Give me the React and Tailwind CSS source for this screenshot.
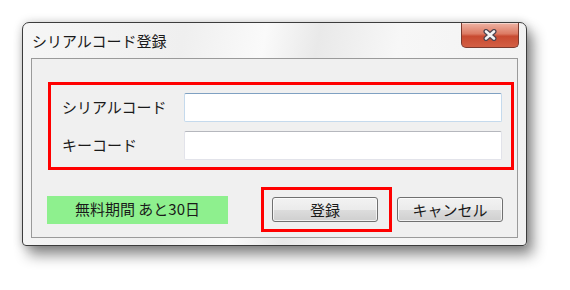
import React from 'react';

const jp = { fontFamily: '"Noto Sans CJK JP", "Noto Sans", sans-serif' };

const CloseButton = () => (
  <div className="absolute right-[7px] top-0 h-[25px] w-[58px] rounded-b-[5px] border border-t-0 border-[#7b3a2e] bg-[linear-gradient(#eeb3a4,#dc7a63_45%,#c84a31_55%,#d35f44)] shadow-[inset_0_1px_0_rgba(255,255,255,0.45)] flex items-center justify-center">
    <svg width="16" height="12" viewBox="0 0 16 12">
      <path d="M4 2.5 L12 9.5 M12 2.5 L4 9.5" stroke="#4f4550" strokeWidth="5" strokeLinecap="round" />
      <path d="M4 2.5 L12 9.5 M12 2.5 L4 9.5" stroke="#f4f4f4" strokeWidth="2.6" strokeLinecap="round" />
    </svg>
  </div>
);

const Field = ({ label, focused }) => (
  <div className="flex items-center">
    <div className="w-[122px] text-[15px] text-[#1a1a1a]">{label}</div>
    <input
      className={
        focused
          ? 'h-[29px] w-[318px] rounded-[2px] border border-[#c5daed] border-t-[#7fa1c2] bg-white outline-none'
          : 'h-[29px] w-[318px] rounded-[2px] border border-[#e2e3ea] border-t-[#b5b7bd] bg-white outline-none'
      }
    />
  </div>
);

const Button = ({ children }) => (
  <button className="h-[25px] w-[106px] rounded-[3px] border border-[#707070] bg-[linear-gradient(#f2f2f2,#ebebeb_50%,#dddddd_50%,#cfcfcf)] text-[15px] leading-none text-[#1a1a1a] shadow-[inset_0_0_0_1px_rgba(255,255,255,0.7)]">
    {children}
  </button>
);

export default function App() {
  return (
    <div className="h-[290px] w-[570px] bg-white pl-[22px] pt-[22px]" style={jp}>
      {/* window */}
      <div className="relative h-[224px] w-[505px] rounded-t-[7px] rounded-b-[4px] border border-[#3c3c3c] bg-[linear-gradient(100deg,#f6f6f6,#efefef_30%,#fafafa_45%,#e9e9e9_55%,#f7f7f7_70%,#f1f1f1)] px-[8px] pb-[7px] shadow-[6px_9px_14px_rgba(0,0,0,0.45),0_0_10px_rgba(0,0,0,0.18)]">
        <div className="flex h-[35px] items-center pl-[1px] pt-[2px] text-[15px] text-[#1a1a1a]">シリアルコード登録</div>
        <CloseButton />

        {/* client area */}
        <div className="h-[180px] w-[487px] border border-[#9a9a9a] bg-[#f0f0f0] pt-[23px]">
          <div className="ml-[16px] flex h-[88px] w-[466px] flex-col gap-[9px] border-[3px] border-[#ff0000] pl-[11px] pt-[8px]">
            <Field label="シリアルコード" focused />
            <Field label="キーコード" />
          </div>

          <div className="mt-[17px] flex items-center">
            <div className="ml-[15px] flex h-[28px] w-[181px] items-center justify-center bg-[#8ef08e] text-[15px] text-[#1a1a1a]">
              無料期間 あと30日
            </div>
            <div className="ml-[33px] flex h-[45px] w-[131px] items-center border-[3px] border-[#ff0000] pl-[8px]">
              <Button>登録</Button>
            </div>
            <div className="ml-[5px]">
              <Button>キャンセル</Button>
            </div>
          </div>
        </div>
      </div>
    </div>
  );
}
